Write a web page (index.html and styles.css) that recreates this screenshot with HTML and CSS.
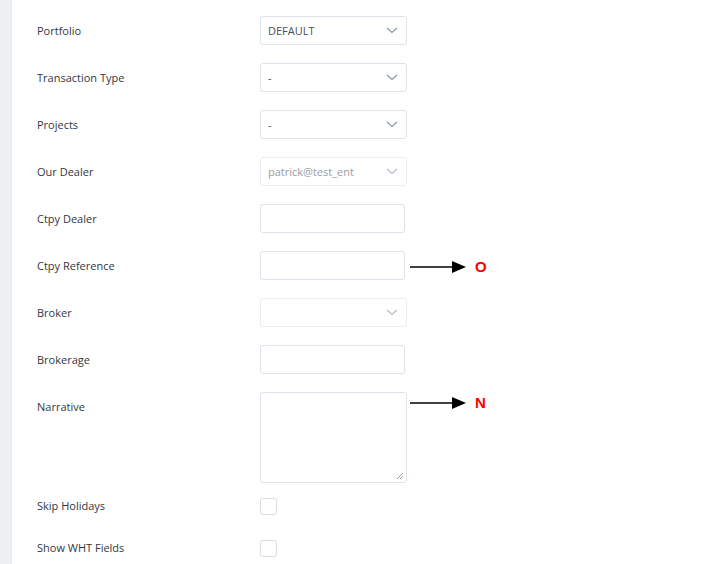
FILE: index.html
```html
<!DOCTYPE html>
<html>
<head>
<meta charset="utf-8">
<link rel="stylesheet" href="styles.css">
</head>
<body>
<div class="page">
  <div class="rail"></div>
  <form class="form">
    <div class="row">
      <label class="lbl">Portfolio</label>
      <div class="select"><span class="val">DEFAULT</span><svg class="chev" width="12" height="7" viewBox="0 0 12 7"><polyline points="1,1 6,5.5 11,1" fill="none" stroke="#8c97a8" stroke-width="1.2"/></svg></div>
    </div>
    <div class="row">
      <label class="lbl">Transaction Type</label>
      <div class="select"><span class="val">-</span><svg class="chev" width="12" height="7" viewBox="0 0 12 7"><polyline points="1,1 6,5.5 11,1" fill="none" stroke="#8c97a8" stroke-width="1.2"/></svg></div>
    </div>
    <div class="row">
      <label class="lbl">Projects</label>
      <div class="select"><span class="val">-</span><svg class="chev" width="12" height="7" viewBox="0 0 12 7"><polyline points="1,1 6,5.5 11,1" fill="none" stroke="#8c97a8" stroke-width="1.2"/></svg></div>
    </div>
    <div class="row">
      <label class="lbl">Our Dealer</label>
      <div class="select disabled"><span class="val">patrick@test_ent</span><svg class="chev" width="12" height="7" viewBox="0 0 12 7"><polyline points="1,1 6,5.5 11,1" fill="none" stroke="#b4bcc8" stroke-width="1.2"/></svg></div>
    </div>
    <div class="row">
      <label class="lbl">Ctpy Dealer</label>
      <div class="input"></div>
    </div>
    <div class="row">
      <label class="lbl">Ctpy Reference</label>
      <div class="input"></div>
    </div>
    <div class="row">
      <label class="lbl">Broker</label>
      <div class="select disabled"><span class="val"></span><svg class="chev" width="12" height="7" viewBox="0 0 12 7"><polyline points="1,1 6,5.5 11,1" fill="none" stroke="#b4bcc8" stroke-width="1.2"/></svg></div>
    </div>
    <div class="row">
      <label class="lbl">Brokerage</label>
      <div class="input"></div>
    </div>
    <div class="row">
      <label class="lbl">Narrative</label>
      <div class="textarea"><svg class="grip" width="8" height="8" viewBox="0 0 8 8"><line x1="7" y1="1" x2="1" y2="7" stroke="#9aa0a8" stroke-width="1"/><line x1="7" y1="4" x2="4" y2="7" stroke="#9aa0a8" stroke-width="1"/></svg></div>
    </div>
    <div class="row check-row first-check">
      <label class="lbl">Skip Holidays</label>
      <div class="check"></div>
    </div>
    <div class="row check-row">
      <label class="lbl">Show WHT Fields</label>
      <div class="check"></div>
    </div>
  </form>

  <div class="note note-o">
    <svg width="56" height="12" viewBox="0 0 56 12"><line x1="0" y1="6" x2="44" y2="6" stroke="#000" stroke-width="1.6"/><polygon points="42,0 56,6 42,12" fill="#000"/></svg>
    <span class="tag">O</span>
  </div>
  <div class="note note-n">
    <svg width="56" height="12" viewBox="0 0 56 12"><line x1="0" y1="6" x2="44" y2="6" stroke="#000" stroke-width="1.6"/><polygon points="42,0 56,6 42,12" fill="#000"/></svg>
    <span class="tag">N</span>
  </div>
</div>
</body>
</html>
```
FILE: styles.css
```css
html, body {
  margin: 0;
  padding: 0;
  background: #ffffff;
}
.page {
  position: relative;
  display: flex;
  min-height: 564px;
  font-family: "Open Sans", "Noto Sans", sans-serif;
}
.rail {
  width: 12px;
  flex: 0 0 12px;
  background: #eef0f3;
  border-right: 1px solid #e6e9ee;
  box-sizing: border-box;
}
.form {
  display: flex;
  flex-direction: column;
  gap: 18px;
  padding: 16px 0 0 25px;
}
.row {
  display: flex;
  align-items: flex-start;
}
.lbl {
  width: 223px;
  flex: 0 0 223px;
  font-size: 11px;
  line-height: 29px;
  color: #333840;
}
.select, .input {
  box-sizing: border-box;
  height: 29px;
  border: 1px solid #dde2ea;
  border-radius: 3px;
  background: #fff;
}
.select {
  width: 147px;
  display: flex;
  align-items: center;
  justify-content: space-between;
  padding: 0 8px 0 7px;
}
.select .val {
  font-size: 11px;
  color: #4a4f57;
}
.select.disabled {
  border-color: #e9ecf1;
}
.select.disabled .val {
  color: #9a9ea6;
}
.chev {
  display: block;
}
.input {
  width: 145px;
}
.textarea {
  box-sizing: border-box;
  width: 147px;
  height: 91px;
  border: 1px solid #dde2ea;
  border-radius: 3px;
  display: flex;
  align-items: flex-end;
  justify-content: flex-end;
  padding: 0 2px 2px 0;
}
.grip {
  display: block;
}
.check-row {
  align-items: center;
}
.first-check {
  margin-top: -5px;
}
.check-row + .check-row {
  margin-top: 4px;
}
.check-row .lbl {
  line-height: 20px;
}
.check {
  box-sizing: border-box;
  width: 17px;
  height: 17px;
  border: 1px solid #d8dce4;
  border-radius: 3px;
  background: #fff;
}
.note {
  position: absolute;
  left: 410px;
  display: flex;
  align-items: center;
  gap: 9px;
}
.note svg {
  display: block;
}
.note-o {
  top: 260px;
}
.note-n {
  top: 396px;
}
.tag {
  font-family: "Liberation Sans", Arial, sans-serif;
  font-weight: bold;
  font-size: 15px;
  line-height: 14px;
  color: #ff0000;
}
```
